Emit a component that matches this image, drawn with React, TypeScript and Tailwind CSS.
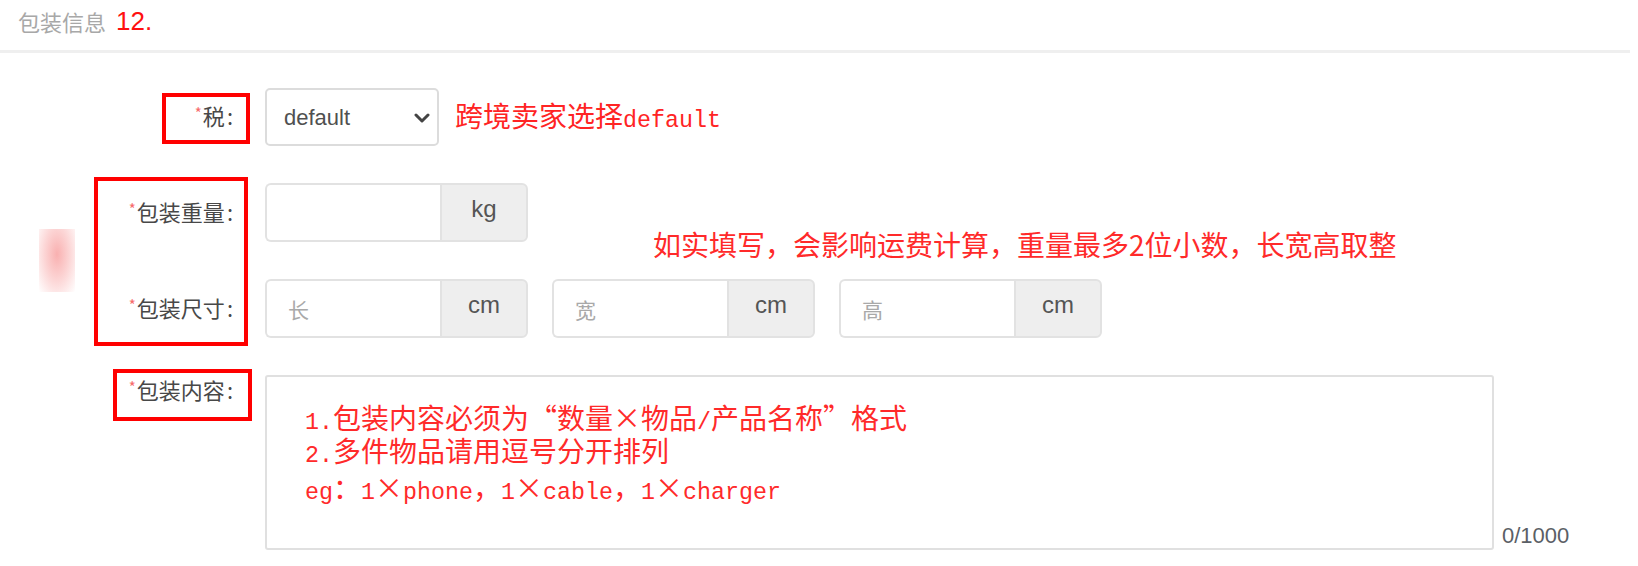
import React from "react";

const CJK = "font-['Noto_Sans_CJK_SC','Noto_Sans',sans-serif]";

function Mixed({ text }: { text: string }) {
  const parts = text.split(/([\x00-\x7f]+|[“”×])/).filter((p) => p.length > 0);
  return (
    <>
      {parts.map((p, i) => {
        if (/^[\x00-\x7f]+$/.test(p)) {
          return (
            <span key={i} className="font-['Liberation_Mono',monospace] text-[0.833em]">
              {p}
            </span>
          );
        }
        if (/^[“”×]$/.test(p)) {
          return (
            <span key={i} className="inline-block w-[1em] text-center">
              {p}
            </span>
          );
        }
        return <span key={i}>{p}</span>;
      })}
    </>
  );
}

function Label({ text }: { text: string }) {
  return (
    <div className={`w-[233px] shrink-0 text-right text-[22px] leading-[26px] text-[#484848] ${CJK}`}>
      <span className="relative top-[-6px] mr-[1px] text-[15px] text-[#f76a6a]">*</span>
      {text}
      <span className="ml-[2px]">:</span>
    </div>
  );
}

function UnitInput({ placeholder, unit }: { placeholder?: string; unit: string }) {
  return (
    <div className="flex h-[59px] w-[263px] shrink-0">
      <input
        placeholder={placeholder}
        className={`h-full w-[175px] rounded-l-[6px] border-2 border-r-0 border-[#e2e2e2] bg-white pl-[21px] text-[21px] text-[#444] outline-none placeholder:text-[#a9a9a9] ${CJK}`}
      />
      <div className="flex h-full w-[88px] items-center justify-center rounded-r-[6px] border-2 border-[#e2e2e2] bg-[#eeeeee] pb-[8px] font-['Liberation_Sans',Arial,sans-serif] text-[24px] text-[#555]">
        {unit}
      </div>
    </div>
  );
}

export default function App() {
  return (
    <div className="relative h-[566px] w-[1638px] overflow-hidden bg-white">
      {/* header */}
      <div className="flex h-[50px] items-center gap-[10px] pb-[8px] pl-[18px]">
        <span className={`text-[22px] text-[#a8a8a8] ${CJK}`}>包装信息</span>
        <span className="font-['Liberation_Sans',Arial,sans-serif] text-[26px] text-[#ff1010]">12.</span>
      </div>
      <div className="mr-[8px] h-[3px] bg-[#efefef]" />

      {/* form */}
      <div className="flex flex-col gap-[37px] pt-[35px]">
        {/* tax */}
        <div className="flex h-[58px] items-center">
          <Label text="税" />
          <div className="relative ml-[32px] h-[58px] w-[174px] shrink-0">
            <select className="h-full w-full appearance-none rounded-[5px] border-2 border-[#dcdcdc] bg-white pl-[17px] font-['Liberation_Sans',Arial,sans-serif] text-[22px] text-[#505050] outline-none">
              <option>default</option>
            </select>
            <svg
              className="pointer-events-none absolute right-[9px] top-[25px]"
              width="16"
              height="10"
              viewBox="0 0 16 10"
              fill="none"
            >
              <path d="M2 2l6 6 6-6" stroke="#444" strokeWidth="3" strokeLinecap="round" strokeLinejoin="round" />
            </svg>
          </div>
          <div className={`ml-[16px] text-[28px] leading-none text-[#ff2424] ${CJK}`}>
            <Mixed text="跨境卖家选择default" />
          </div>
        </div>

        {/* weight */}
        <div className="flex h-[59px] items-center">
          <Label text="包装重量" />
          <div className="ml-[32px]">
            <UnitInput unit="kg" />
          </div>
        </div>

        {/* size */}
        <div className="flex h-[59px] items-center">
          <Label text="包装尺寸" />
          <div className="ml-[32px] flex gap-[24px]">
            <UnitInput placeholder="长" unit="cm" />
            <UnitInput placeholder="宽" unit="cm" />
            <UnitInput placeholder="高" unit="cm" />
          </div>
        </div>

        {/* content */}
        <div className="flex items-start">
          <div className="pt-[1px]">
            <Label text="包装内容" />
          </div>
          <div
            className={`ml-[32px] h-[175px] w-[1229px] shrink-0 rounded-[3px] border-2 border-[#e0e0e0] pl-[38px] pt-[24px] text-[28px] text-[#ff2a2a] ${CJK}`}
          >
            <div className="h-[33px] whitespace-nowrap leading-[33px]">
              <Mixed text="1.包装内容必须为“数量×物品/产品名称”格式" />
            </div>
            <div className="h-[35px] whitespace-nowrap leading-[33px]">
              <Mixed text="2.多件物品请用逗号分开排列" />
            </div>
            <div className="h-[36px] whitespace-nowrap leading-[36px]">
              <Mixed text="eg：1×phone，1×cable，1×charger" />
            </div>
          </div>
          <div className="mb-[3px] ml-[8px] self-end font-['Liberation_Sans',Arial,sans-serif] text-[22px] leading-none text-[#5b5f66]">
            0/1000
          </div>
        </div>
      </div>

      {/* annotation overlays */}
      <div className={`absolute left-[653px] top-[225px] text-[28px] leading-[38px] text-[#ff2a2a] ${CJK}`}>
        如实填写，会影响运费计算，重量最多2位小数，长宽高取整
      </div>
      <div className="absolute left-[39px] top-[229px] h-[63px] w-[36px] bg-[radial-gradient(ellipse_at_50%_40%,#f9b0b0_0%,#fcd6d6_50%,#ffffff_100%)]" />
      <div className="pointer-events-none absolute left-[162px] top-[93px] h-[51px] w-[88px] border-4 border-[#ff0000]" />
      <div className="pointer-events-none absolute left-[94px] top-[177px] h-[169px] w-[154px] border-4 border-[#ff0000]" />
      <div className="pointer-events-none absolute left-[113px] top-[369px] h-[52px] w-[139px] border-4 border-[#ff0000]" />
    </div>
  );
}
